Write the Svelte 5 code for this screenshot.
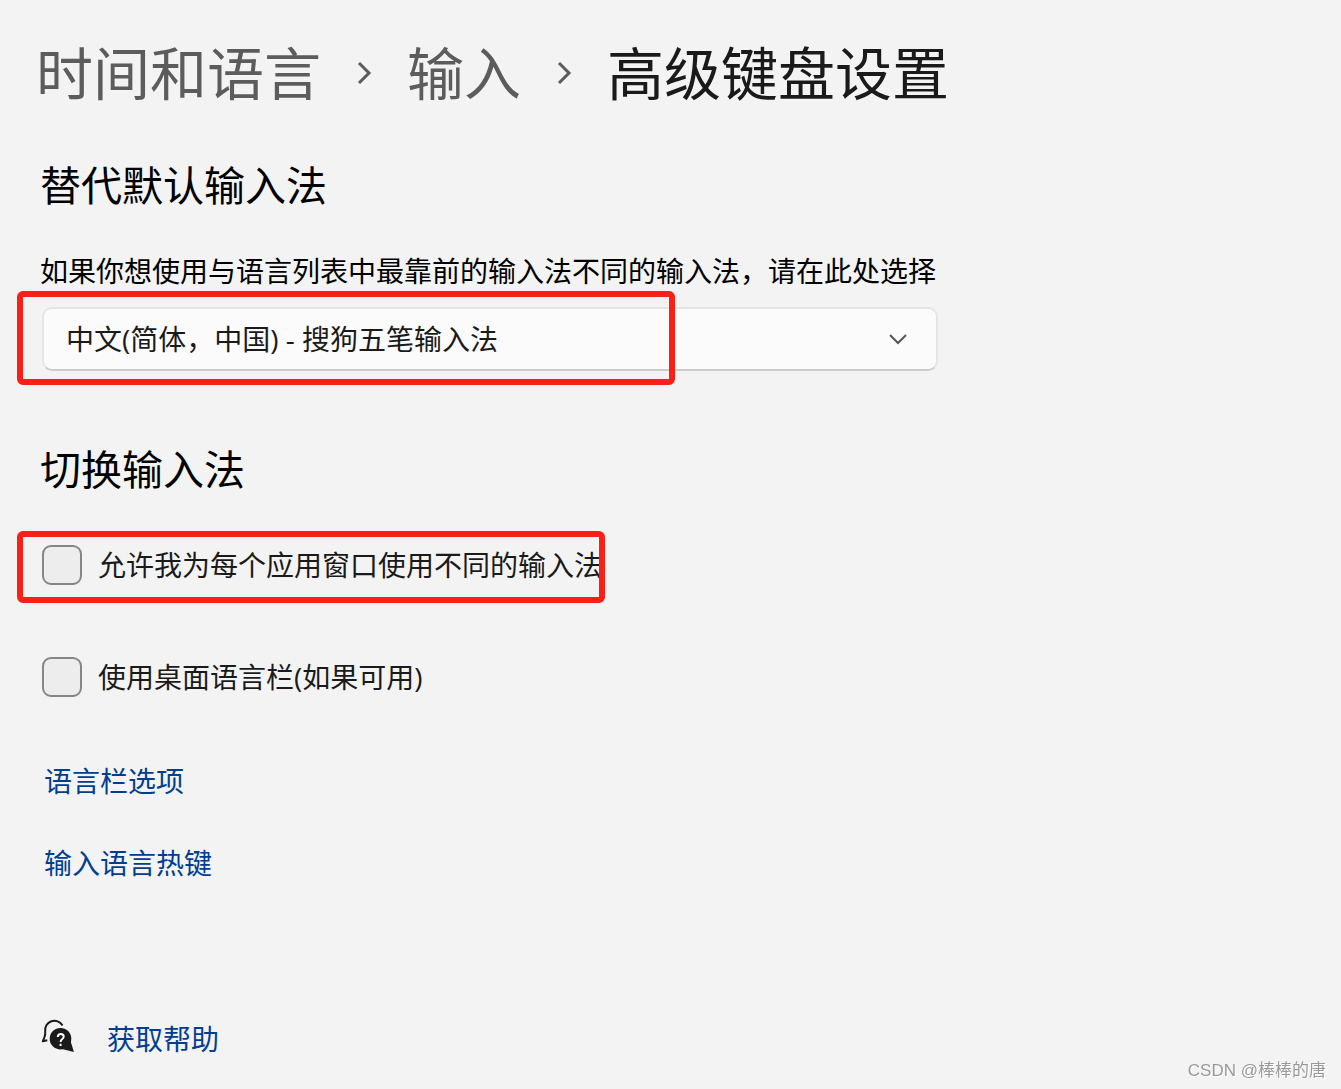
<script>
  let method = $state('sogou');
  let perWindow = $state(false);
  let desktopBar = $state(false);
</script>

<main>
  <nav aria-label="路径">
    <a href="#time">时间和语言</a>
    <svg class="sep" viewBox="0 0 16 24" aria-hidden="true"><path d="M3 2l10 10-10 10" /></svg>
    <a href="#typing">输入</a>
    <svg class="sep" viewBox="0 0 16 24" aria-hidden="true"><path d="M3 2l10 10-10 10" /></svg>
    <h1>高级键盘设置</h1>
  </nav>

  <section>
    <h2>替代默认输入法</h2>
    <label class="desc" for="method">如果你想使用与语言列表中最靠前的输入法不同的输入法，请在此处选择</label>
    <div class="picker">
      <select id="method" bind:value={method}>
        <option value="sogou">中文(简体，中国) - 搜狗五笔输入法</option>
      </select>
      <svg class="chevron" viewBox="0 0 20 12" aria-hidden="true"><path d="M2 2l8 8 8-8" /></svg>
      <span class="mark mark-picker"></span>
    </div>
  </section>

  <section class="switching">
    <h2>切换输入法</h2>
    <label class="check">
      <input type="checkbox" bind:checked={perWindow} />
      <span>允许我为每个应用窗口使用不同的输入法</span>
      <span class="mark mark-check"></span>
    </label>
    <label class="check">
      <input type="checkbox" bind:checked={desktopBar} />
      <span>使用桌面语言栏(如果可用)</span>
    </label>
  </section>

  <div class="links">
    <a href="#bar">语言栏选项</a>
    <a href="#hotkeys">输入语言热键</a>
  </div>

  <div class="help">
    <svg viewBox="0 0 34 34" aria-hidden="true">
      <path class="outline" d="M21.500 6.500A9.300 9.300 0 0 0 4.200 12.500Q4.500 15.500 3.500 18L1.800 22.300 6.300 21.300" />
      <circle cx="19.500" cy="19.700" r="10.800" />
      <path d="M29.500 22l3.400 10.900L21 30z" />
      <path class="question" d="M16.800 18q.1-3 3-3t2.900 2.600q0 1.500-1.600 2.600-1.500 1-1.500 2.800M19.600 24.700v2.400" />
    </svg>
    <a href="#help">获取帮助</a>
  </div>
</main>
<footer>CSDN @棒棒的唐</footer>

<style>
  :global(body) {
    background: #f3f3f3;
    color: #1a1a1a;
    font-family: "Open Sans", "Noto Sans CJK SC", sans-serif;
    font-size: 28px;
    font-weight: 400;
  }
  main { padding: 31px 40px 0; }
  nav { display: flex; align-items: center; gap: 35px; margin-left: -4px; }
  nav a, h1 { font-size: 57px; line-height: 84px; font-weight: 400; margin: 0; white-space: nowrap; }
  nav a { color: #5c5c5c; }
  a { text-decoration: none; color: #003e92; }
  svg { flex: none; }
  .sep { width: 16px; height: 24px; fill: none; stroke: #5c5c5c; stroke-width: 3; }
  h2 { margin: 40px 0 36px; font-size: 41px; line-height: 60px; font-weight: 400; color: #000; }
  .desc { display: block; line-height: 40px; margin-bottom: 16px; color: #000; white-space: nowrap; }
  .picker { position: relative; max-width: 896px; margin-left: 2px; }
  select {
    appearance: none; display: block; width: 100%; height: 64px; padding: 0 64px 0 22px;
    border: 2px solid #e5e5e5; border-bottom-color: #ccc; border-radius: 10px;
    background: #fbfbfb; color: #1a1a1a; font: inherit;
  }
  .chevron { position: absolute; right: 30px; top: 26px; width: 20px; height: 12px; fill: none; stroke: #555; stroke-width: 2; }
  .mark { position: absolute; border: 6px solid #fb2015; border-radius: 6px; pointer-events: none; box-sizing: border-box; }
  .mark-picker { left: -25px; top: -16px; width: 658px; height: 94px; }
  .mark-check { left: -25px; top: -14px; width: 588px; height: 72px; }
  .switching { margin-top: 68px; }
  .switching h2 { margin-bottom: 46px; }
  .check { position: relative; display: flex; align-items: center; gap: 16px; width: fit-content; min-height: 40px; margin: 0 0 72px 2px; white-space: nowrap; line-height: 40px; }
  .check input { appearance: none; width: 40px; height: 40px; margin: 0; border: 2px solid #868686; border-radius: 9px; background: #ededed; }
  .check input:checked { background: #003e92; }
  .links { display: flex; flex-direction: column; align-items: flex-start; gap: 42px; line-height: 40px; margin: -8px 0 0 4px; }
  .help { display: flex; align-items: flex-start; gap: 32px; margin: 136px 0 0 1px; line-height: 40px; }
  .help svg { width: 34px; height: 34px; fill: #1a1a1a; }
  .help .outline { fill: none; stroke: #1a1a1a; stroke-width: 2; stroke-linejoin: round; }
  .help .question { fill: none; stroke: #fff; stroke-width: 2; }
  footer { position: fixed; right: 15px; bottom: 6px; font-family: "Liberation Sans", "Noto Sans CJK SC", sans-serif; font-size: 17px; line-height: 24px; color: #999; text-shadow: 1px 1px 0 #fff; }
</style>
